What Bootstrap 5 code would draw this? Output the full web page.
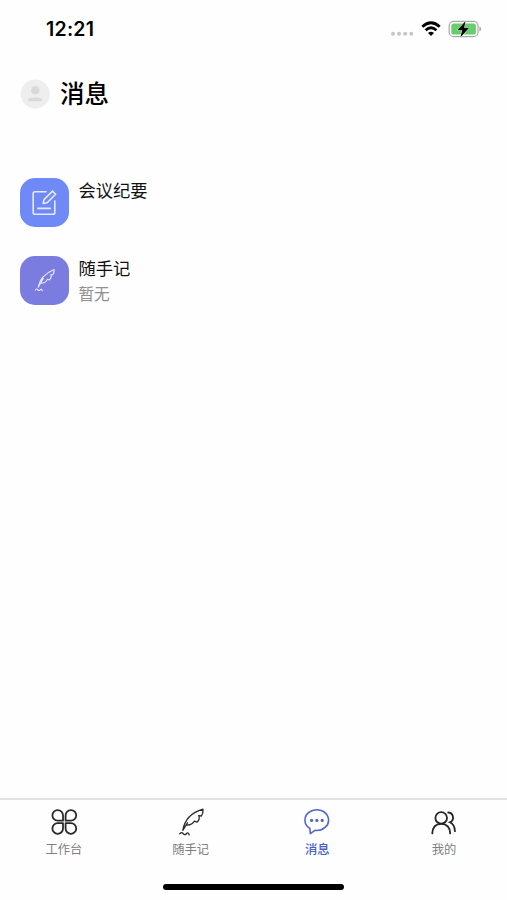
<!DOCTYPE html>
<html lang="zh-CN">
<head>
<meta charset="utf-8">
<meta name="viewport" content="width=device-width, initial-scale=1">
<title>消息</title>
<link href="https://cdn.jsdelivr.net/npm/bootstrap@5.3.0/dist/css/bootstrap.min.css" rel="stylesheet">
<style>
  body { font-family: "Liberation Sans", "Noto Sans CJK SC", sans-serif; background: #fefefe; color: #000; }
  svg { display: block; flex: none; }
  .screen { height: 900px; }
  .status-bar { height: 57px; padding: 0 25px 0 46px; }
  .clock { font: 600 19.5px/24px Inter, sans-serif; letter-spacing: .25px; padding-top: 1px; }
  .page-head { height: 73px; padding-left: 20px; gap: 10px; }
  .page-title { font-size: 24.5px; line-height: 36px; font-weight: 500; padding-top: 3px; }
  .messages { padding: 48px 20px 0; gap: 29px; }
  .tile { width: 49px; height: 49px; border-radius: 15px; margin-left: .4px; }
  .tile-minutes { background: #6f89f7; }
  .tile-notes { background: #7b7ce0; }
  .message { gap: 9px; height: 49px; }
  .message-title { font-size: 17.3px; line-height: 25px; color: #111; padding-top: 1px; }
  .message-sub { font-size: 15.7px; line-height: 24px; color: #909090; padding-top: 1px; }
  .tabs { height: 102px; border-top: 2px solid #e2e2e2; padding-top: 8px; }
  .tab { color: #808080; font-size: 12.3px; line-height: 18px; gap: 5px; padding-left: 1px; }
  .tab.current { color: #4560c4; font-weight: 500; }
  .home-bar { width: 181px; height: 6px; background: #000; margin-bottom: 10px; }
</style>
</head>
<body>
<div class="screen d-flex flex-column overflow-hidden">
  <header class="status-bar d-flex align-items-center justify-content-between">
    <span class="clock">12:21</span>
    <svg width="92" height="24" viewBox="390 16.5 92 24">
      <g fill="#c7c7c7"><circle cx="393" cy="33.3" r="2"/><circle cx="399" cy="33.3" r="2"/><circle cx="405.2" cy="33.3" r="2"/><circle cx="411.3" cy="33.3" r="2"/></g>
      <g fill="none" stroke="#000" stroke-width="2.8">
        <path d="M422.3 26.3Q431 18.3 439.7 26.3"/><path d="M425.6 29.8Q431 24.8 436.4 29.8"/>
      </g>
      <path d="M431 35.6l-3-3q3-2.6 6 0z"/>
      <rect x="449.2" y="20.8" width="28.8" height="15.4" rx="4.5" fill="#fff" stroke="#a9a9a9" stroke-width="1.2"/>
      <rect x="451.3" y="22.9" width="24.6" height="11.2" rx="2.7" fill="#65ce6b"/>
      <path d="M479.4 26q1.8.6 1.8 2.5t-1.8 2.5z" fill="#a9a9a9"/>
      <path d="M465.6 20.6l-8.3 9.1h4.9l-1.9 7.2 8.9-9.6h-5.1z" stroke="#fff" stroke-width="1" paint-order="stroke"/>
    </svg>
  </header>

  <div class="page-head d-flex align-items-center">
    <svg width="30" height="30" viewBox="0 0 30 30"><circle cx="15.2" cy="15" r="14.6" fill="#eeeeee"/><circle cx="15.3" cy="11.3" r="4.3" fill="#d9d9d9"/><path d="M8 20.8Q8 18.4 15 18.4T22 20.8Q22 22.2 20 22.2H10Q8 22.2 8 20.8z" fill="#d9d9d9"/></svg>
    <h1 class="page-title m-0">消息</h1>
  </div>

  <main class="messages d-flex flex-column flex-grow-1">
    <div class="message d-flex">
      <div class="tile tile-minutes flex-shrink-0">
        <svg width="49" height="49" viewBox="0 0 49 49" fill="none" stroke="#e6eaff" stroke-width="1.6" stroke-linecap="round" stroke-linejoin="round"><path d="M26 13.7H15q-1.8 0-1.8 1.8v19q0 1.8 1.8 1.8h18q1.8 0 1.8-1.8V23M17.8 30.4h12.5M24 21.6L32.5 13.1l3.1 3.1-8.5 8.6-3.9.7z"/></svg>
      </div>
      <div><div class="message-title">会议纪要</div></div>
    </div>
    <div class="message d-flex">
      <div class="tile tile-notes flex-shrink-0">
        <svg width="49" height="49" viewBox="0 0 49 49" fill="none" stroke="#e9e9ff" stroke-width="1.1" stroke-linecap="round" stroke-linejoin="round"><path d="M18.2 31.2Q20 19.5 34.1 13.5Q34.3 16.6 32.8 18.8L30.9 18.6Q32 21 29.5 24L27.3 23.3Q26 27.3 20.1 27.2M18.2 31.2L23.3 22.4M15.4 33.8q1.4-1.5 2.5 0t2.3 0 2 .9"/></svg>
      </div>
      <div><div class="message-title">随手记</div><div class="message-sub">暂无</div></div>
    </div>
  </main>

  <footer class="tabs d-flex flex-column justify-content-between">
    <nav class="row g-0 text-center">
      <div class="tab col-3 d-flex flex-column align-items-center">
        <svg width="28" height="28" viewBox="0 0 28 28" fill="none" stroke="#292929" stroke-width="1.8" stroke-linejoin="round"><path d="M13 12.7H7.8A5.3 5.3 0 1 1 13 7.4z"/><path d="M15.6 12.7H20.8A5.3 5.3 0 1 0 15.6 7.4zM13 15.2H7.8A5.3 5.3 0 1 0 13 20.5zM15.6 15.2H20.8A5.3 5.3 0 1 1 15.6 20.5z"/></svg>
        <span>工作台</span>
      </div>
      <div class="tab col-3 d-flex flex-column align-items-center">
        <svg width="28" height="28" viewBox="0 0 28 28" fill="none" stroke="#292929" stroke-width="1.3" stroke-linecap="round" stroke-linejoin="round"><path d="M5.8 22.4Q8.4 6.2 26 1.1Q26.4 4.8 24.4 8L21.7 7.6Q23.4 11.4 20 14.2L17.4 13.2Q14.8 17.4 9.4 17M5.8 22.4L10.5 14.8M2.8 25.7q2-2 3.4 0t3.2 0 2.8 1.3"/></svg>
        <span>随手记</span>
      </div>
      <div class="tab current col-3 d-flex flex-column align-items-center">
        <svg width="28" height="28" viewBox="0 0 28 28" fill="none" stroke="#5269c8" stroke-width="1.6" stroke-linejoin="round"><path d="M6.9 20.5A11.8 10.3 0 1 1 12 22.3L7.3 25.6z"/><g fill="#5269c8" stroke="none"><circle cx="8.6" cy="12.4" r="1.6"/><circle cx="13.9" cy="12.4" r="1.6"/><circle cx="19.2" cy="12.4" r="1.6"/></g></svg>
        <span>消息</span>
      </div>
      <div class="tab col-3 d-flex flex-column align-items-center">
        <svg width="28" height="28" viewBox="0 0 28 28" fill="none" stroke="#252525" stroke-width="1.8" stroke-linecap="round"><circle cx="11.2" cy="9.9" r="5.8"/><path d="M2.3 25.4Q2.7 15.8 11.2 15.8T20.2 25.4M18.2 4.5a5.1 5.1 0 0 1 1.7 9.8Q24.8 16.5 24.9 23.2"/></svg>
        <span>我的</span>
      </div>
    </nav>
    <div class="home-bar rounded-pill mx-auto"></div>
  </footer>
</div>
<script src="https://cdn.jsdelivr.net/npm/bootstrap@5.3.0/dist/js/bootstrap.bundle.min.js"></script>
</body>
</html>
